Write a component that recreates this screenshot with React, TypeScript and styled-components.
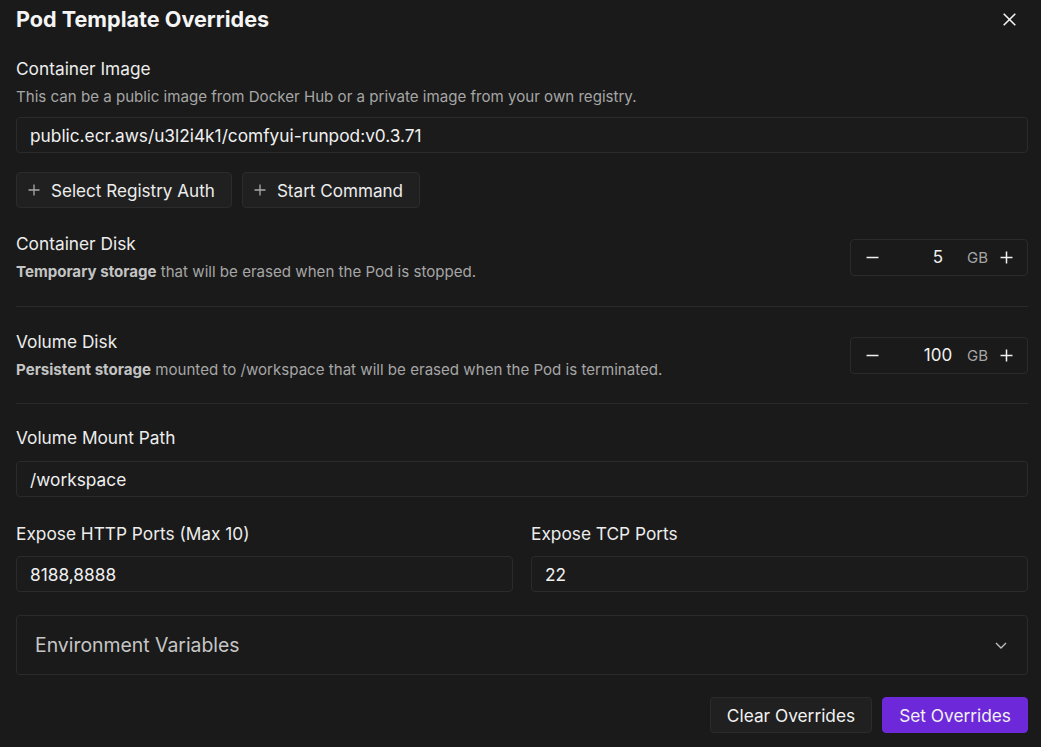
import React from "react";
import styled, { createGlobalStyle } from "styled-components";

const Global = createGlobalStyle`
  html, body { margin: 0; padding: 0; background: #1a1a1a; }
  body { font-family: Inter, "Noto Sans", "Liberation Sans", sans-serif; color: #f2f2f2; }
  * { box-sizing: border-box; }
`;

const Page = styled.div`
  width: 1041px;
  height: 747px;
  background: #1a1a1a;
  padding: 5px 13px 0 16px;
  display: flex;
  flex-direction: column;
`;

const Header = styled.div`
  display: flex;
  align-items: center;
  justify-content: space-between;
  height: 28px;
`;

const Title = styled.h1`
  margin: 0;
  font-size: 21.6px;
  line-height: 28px;
  font-weight: 700;
  color: #f5f5f5;
`;

const CloseBtn = styled.button`
  background: none;
  border: none;
  padding: 0;
  margin-right: 12px;
  width: 14px;
  height: 14px;
  display: flex;
  align-items: center;
  justify-content: center;
  color: #f2f2f2;
`;

const Label = styled.div<{ $top?: number }>`
  margin-top: ${(p) => p.$top ?? 0}px;
  font-size: 17.3px;
  line-height: 24px;
  font-weight: 400;
  color: #ededed;
`;

const Desc = styled.div`
  margin-top: 6px;
  font-size: 15.1px;
  line-height: 20px;
  color: #a6a6a6;
  b { font-weight: 700; color: #c4c4c4; }
`;

const Input = styled.div<{ $top?: number }>`
  margin-top: ${(p) => p.$top ?? 10}px;
  height: 36px;
  border: 1px solid #2b2b2b;
  border-radius: 4px;
  background: #1b1b1b;
  display: flex;
  align-items: center;
  padding: 0 13px;
  font-size: 17.3px;
  color: #f0f0f0;
`;

const ButtonRow = styled.div`
  margin-top: 19px;
  display: flex;
  gap: 10px;
`;

const GhostButton = styled.button`
  height: 36px;
  display: flex;
  align-items: center;
  gap: 11px;
  padding: 0 16px 0 11px;
  background: #202020;
  border: 1px solid #2b2b2b;
  border-radius: 4px;
  font-family: inherit;
  font-size: 17.1px;
  color: #ededed;
`;

const DiskRow = styled.div<{ $top: number }>`
  margin-top: ${(p) => p.$top}px;
  display: flex;
  align-items: center;
  justify-content: space-between;
`;

const DiskText = styled.div`
  display: flex;
  flex-direction: column;
`;

const Divider = styled.div<{ $top?: number }>`
  margin-top: ${(p) => p.$top ?? 24}px;
  height: 1px;
  background: #2a2a2a;
`;

const Stepper = styled.div`
  width: 178px;
  height: 37px;
  border: 1px solid #2b2b2b;
  border-radius: 4px;
  display: flex;
  align-items: center;
  padding-right: 4px;
`;

const StepBtn = styled.button<{ $w: number }>`
  width: ${(p) => p.$w}px;
  height: 100%;
  background: none;
  border: none;
  padding: 0;
  display: flex;
  align-items: center;
  justify-content: center;
  color: #f0f0f0;
`;

const StepValue = styled.div`
  width: 58px;
  margin-left: 16px;
  text-align: center;
  font-size: 17px;
  color: #f0f0f0;
`;

const Unit = styled.div`
  width: 22px;
  font-size: 15px;
  color: #a6a6a6;
`;

const PortsGrid = styled.div`
  margin-top: 25px;
  display: grid;
  grid-template-columns: 1fr 1fr;
  column-gap: 18px;
`;

const Field = styled.div`
  display: flex;
  flex-direction: column;
`;

const EnvBox = styled.div`
  margin-top: 23px;
  height: 60px;
  border: 1px solid #2b2b2b;
  border-radius: 4px;
  display: flex;
  align-items: center;
  justify-content: space-between;
  padding: 0 20px 0 18px;
  font-size: 19.4px;
  color: #c6c6c6;
`;

const Footer = styled.div`
  margin-top: 22px;
  display: flex;
  justify-content: flex-end;
  gap: 10px;
`;

const FooterButton = styled.button<{ $primary?: boolean }>`
  height: 36px;
  padding: 0 16px;
  border-radius: 4px;
  font-family: inherit;
  font-size: 17.3px;
  color: #f2f2f2;
  background: ${(p) => (p.$primary ? "#6d28d9" : "#202020")};
  border: 1px solid ${(p) => (p.$primary ? "#6d28d9" : "#2b2b2b")};
`;

const PlusIcon = ({ size = 12, color = "#a8a8a8", w = 1.3 }: { size?: number; color?: string; w?: number }) => (
  <svg width={size} height={size} viewBox="0 0 12 12" fill="none">
    <path d="M6 0.5v11M0.5 6h11" stroke={color} strokeWidth={w} />
  </svg>
);

const MinusIcon = () => (
  <svg width={13} height={13} viewBox="0 0 12 12" fill="none">
    <path d="M0.5 6h11" stroke="#f0f0f0" strokeWidth={1.4} />
  </svg>
);

const Stepbox = ({ value }: { value: string }) => (
  <Stepper>
    <StepBtn $w={42}>
      <MinusIcon />
    </StepBtn>
    <StepValue>{value}</StepValue>
    <Unit>GB</Unit>
    <StepBtn $w={34}>
      <PlusIcon size={13} color="#f0f0f0" w={1.4} />
    </StepBtn>
  </Stepper>
);

export default function App() {
  return (
    <>
      <Global />
      <Page>
        <Header>
          <Title>Pod Template Overrides</Title>
          <CloseBtn aria-label="Close">
            <svg width="13" height="13" viewBox="0 0 13 13" fill="none">
              <path d="M0.7 0.7l11.6 11.6M12.3 0.7L0.7 12.3" stroke="#f2f2f2" strokeWidth="1.6" />
            </svg>
          </CloseBtn>
        </Header>

        <Label $top={24}>Container Image</Label>
        <Desc>This can be a public image from Docker Hub or a private image from your own registry.</Desc>
        <Input>public.ecr.aws/u3l2i4k1/comfyui-runpod:v0.3.71</Input>

        <ButtonRow>
          <GhostButton>
            <PlusIcon />
            Select Registry Auth
          </GhostButton>
          <GhostButton>
            <PlusIcon />
            Start Command
          </GhostButton>
        </ButtonRow>

        <DiskRow $top={24}>
          <DiskText>
            <Label>Container Disk</Label>
            <Desc>
              <b>Temporary storage</b> that will be erased when the Pod is stopped.
            </Desc>
          </DiskText>
          <Stepbox value="5" />
        </DiskRow>
        <Divider />

        <DiskRow $top={23}>
          <DiskText>
            <Label>Volume Disk</Label>
            <Desc>
              <b>Persistent storage</b> mounted to /workspace that will be erased when the Pod is terminated.
            </Desc>
          </DiskText>
          <Stepbox value="100" />
        </DiskRow>
        <Divider $top={23} />

        <Label $top={22}>Volume Mount Path</Label>
        <Input $top={11}>/workspace</Input>

        <PortsGrid>
          <Field>
            <Label>Expose HTTP Ports (Max 10)</Label>
            <Input>8188,8888</Input>
          </Field>
          <Field>
            <Label>Expose TCP Ports</Label>
            <Input>22</Input>
          </Field>
        </PortsGrid>

        <EnvBox>
          Environment Variables
          <svg width="12" height="7" viewBox="0 0 12 7" fill="none">
            <path d="M1 1l5 5 5-5" stroke="#bdbdbd" strokeWidth="1.4" />
          </svg>
        </EnvBox>

        <Footer>
          <FooterButton>Clear Overrides</FooterButton>
          <FooterButton $primary>Set Overrides</FooterButton>
        </Footer>
      </Page>
    </>
  );
}
